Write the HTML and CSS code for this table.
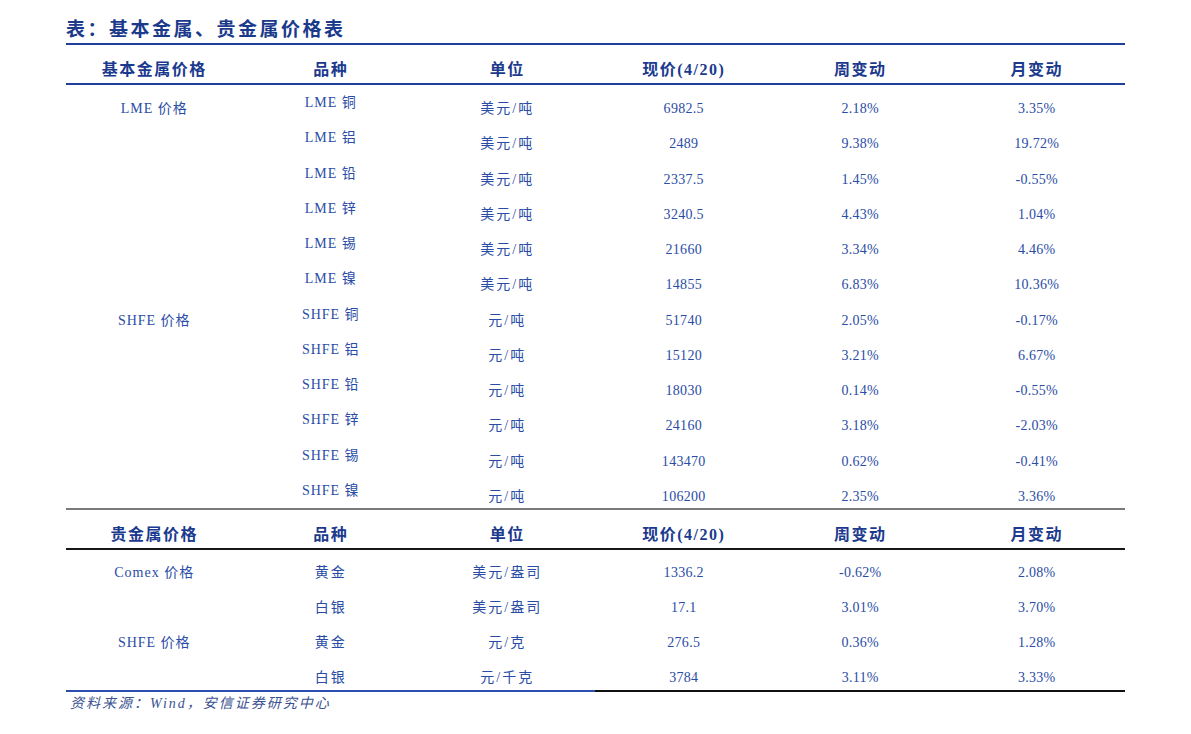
FILE: index.html
```html
<!DOCTYPE html>
<html lang="zh">
<head>
<meta charset="utf-8">
<title>基本金属、贵金属价格表</title>
<link rel="stylesheet" href="styles.css">
</head>
<body>
<div class="page">
  <div class="title">表：基本金属、贵金属价格表</div>
  <div class="rule blue"></div>
  <div class="row head">
    <div>基本金属价格</div><div>品种</div><div>单位</div><div>现价(4/20)</div><div>周变动</div><div>月变动</div>
  </div>
  <div class="rule blue"></div>
  <div class="section s1">
    <div class="row"><div class="name">LME 价格</div><div class="up name">LME 铜</div><div class="unit">美元/吨</div><div>6982.5</div><div>2.18%</div><div>3.35%</div></div>
    <div class="row"><div></div><div class="up name">LME 铝</div><div class="unit">美元/吨</div><div>2489</div><div>9.38%</div><div>19.72%</div></div>
    <div class="row"><div></div><div class="up name">LME 铅</div><div class="unit">美元/吨</div><div>2337.5</div><div>1.45%</div><div>-0.55%</div></div>
    <div class="row"><div></div><div class="up name">LME 锌</div><div class="unit">美元/吨</div><div>3240.5</div><div>4.43%</div><div>1.04%</div></div>
    <div class="row"><div></div><div class="up name">LME 锡</div><div class="unit">美元/吨</div><div>21660</div><div>3.34%</div><div>4.46%</div></div>
    <div class="row"><div></div><div class="up name">LME 镍</div><div class="unit">美元/吨</div><div>14855</div><div>6.83%</div><div>10.36%</div></div>
    <div class="row"><div class="name">SHFE 价格</div><div class="up name">SHFE 铜</div><div class="unit">元/吨</div><div>51740</div><div>2.05%</div><div>-0.17%</div></div>
    <div class="row"><div></div><div class="up name">SHFE 铝</div><div class="unit">元/吨</div><div>15120</div><div>3.21%</div><div>6.67%</div></div>
    <div class="row"><div></div><div class="up name">SHFE 铅</div><div class="unit">元/吨</div><div>18030</div><div>0.14%</div><div>-0.55%</div></div>
    <div class="row"><div></div><div class="up name">SHFE 锌</div><div class="unit">元/吨</div><div>24160</div><div>3.18%</div><div>-2.03%</div></div>
    <div class="row"><div></div><div class="up name">SHFE 锡</div><div class="unit">元/吨</div><div>143470</div><div>0.62%</div><div>-0.41%</div></div>
    <div class="row"><div></div><div class="up name">SHFE 镍</div><div class="unit">元/吨</div><div>106200</div><div>2.35%</div><div>3.36%</div></div>
  </div>
  <div class="rule gray"></div>
  <div class="row head">
    <div>贵金属价格</div><div>品种</div><div>单位</div><div>现价(4/20)</div><div>周变动</div><div>月变动</div>
  </div>
  <div class="rule black"></div>
  <div class="section s2">
    <div class="row"><div class="name">Comex 价格</div><div class="unit">黄金</div><div class="unit">美元/盎司</div><div>1336.2</div><div>-0.62%</div><div>2.08%</div></div>
    <div class="row"><div></div><div class="unit">白银</div><div class="unit">美元/盎司</div><div>17.1</div><div>3.01%</div><div>3.70%</div></div>
    <div class="row"><div class="name">SHFE 价格</div><div class="unit">黄金</div><div class="unit">元/克</div><div>276.5</div><div>0.36%</div><div>1.28%</div></div>
    <div class="row"><div></div><div class="unit">白银</div><div class="unit">元/千克</div><div>3784</div><div>3.11%</div><div>3.33%</div></div>
  </div>
  <div class="rule split"><div class="l"></div><div class="r"></div></div>
  <div class="source">资料来源：Wind，安信证券研究中心</div>
</div>
</body>
</html>
```
FILE: styles.css
```css
html, body {
  margin: 0;
  padding: 0;
  background: #ffffff;
}
body {
  font-family: "Liberation Serif", "Noto Sans CJK SC", serif;
  color: #2a4ca6;
}
.page {
  padding: 0 66px;
  width: 1059px;
}
.title {
  height: 43px;
  box-sizing: border-box;
  padding-top: 18px;
  line-height: 24px;
  font-size: 19px;
  font-weight: bold;
  letter-spacing: 2.5px;
  color: #1b3a8c;
}
.rule {
  height: 2px;
}
.rule.blue { background: #1f3f9c; }
.rule.gray { background: #7a7a7a; }
.rule.black { background: #161616; }
.rule.split {
  display: flex;
}
.rule.split .l {
  width: 529px;
  background: #2a4fb0;
}
.rule.split .r {
  flex: 1;
  background: #111111;
}
.row {
  display: grid;
  grid-template-columns: repeat(6, 1fr);
  text-align: center;
}
.row > div {
  white-space: nowrap;
}
.head {
  height: 38px;
  box-sizing: border-box;
  padding-top: 15px;
  line-height: 20px;
  font-size: 16px;
  font-weight: bold;
  letter-spacing: 1.5px;
  color: #1b3a8e;
}
.section .row {
  font-size: 14px;
  line-height: 16px;
  letter-spacing: 0.3px;
}
.section .row > div.name {
  letter-spacing: 1px;
}
.section .row > div.unit {
  letter-spacing: 2px;
}
.s1 .row {
  height: 35.25px;
}
.s1 .row > div {
  padding-top: 16px;
}
.s1 .row > div.up {
  padding-top: 10px;
}
.s2 .row {
  height: 35px;
}
.s2 .row > div {
  padding-top: 15px;
}
.source {
  padding: 4px 0 0 4px;
  line-height: 16px;
  font-size: 14px;
  font-style: italic;
  color: #3b5290;
  letter-spacing: 2px;
}
```
